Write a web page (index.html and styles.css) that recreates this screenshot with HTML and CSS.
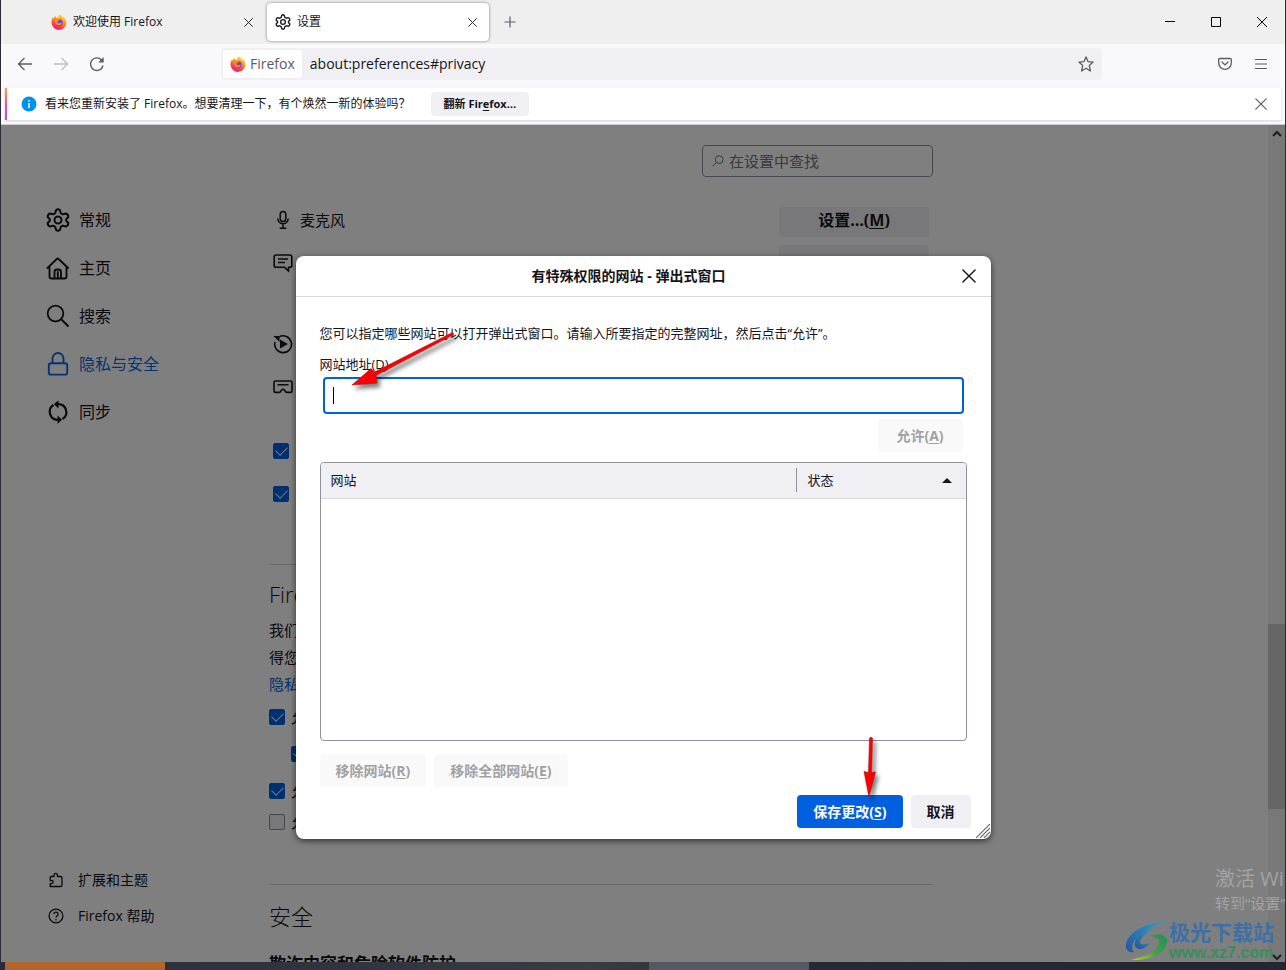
FILE: index.html
```html
<!DOCTYPE html>
<html lang="zh-CN">
<head>
<meta charset="utf-8">
<title>设置</title>
<link rel="stylesheet" href="styles.css">
</head>
<body>
<svg class="defs" width="0" height="0" aria-hidden="true">
  <defs>
    <linearGradient id="flame" x1="0.8" y1="0" x2="0.3" y2="1">
      <stop offset="0" stop-color="#fff14a"/><stop offset="0.4" stop-color="#ff9a1f"/><stop offset="0.75" stop-color="#ff3a4a"/><stop offset="1" stop-color="#e8178a"/>
    </linearGradient>
    <symbol id="firefox" viewBox="0 0 16 16">
      <path fill="url(#flame)" d="M8.800.3c1.700.8 2.500 2 2.800 3.100.5.1.9-.4.9-.9 1.700 1.500 3 3.500 3 6A7.500 7.500 0 0 1 8 15.900 7.500 7.500 0 0 1 .5 8.400c0-2 .5-3.800 1.700-5.200 0 .6.1 1 .4 1.300C3 3.400 3.700 2.600 4.700 2c0 .8.3 1.500.8 1.900h1.600C7.200 2.400 7.700 1.200 8.800.3z"/>
      <circle cx="8" cy="8.600" r="3.700" fill="#7542e5"/>
      <path fill="#ff8a16" d="M3.400 5.300c1-.9 2.400-1 3.700-.4.7.3 1.500.3 2.200.4-.3.900-1.100 1.200-2 1.400-.6.200-.8.700-.8 1.200.1 1.300 1.800 1.900 3 1.100.6-.4 1.100-.3 1.400 0-.5 1.700-2.200 2.600-3.900 2.200C4.400 10.700 3 8.100 3.400 5.300z"/>
    </symbol>
    <symbol id="gear" viewBox="0 0 24 24">
      <g fill="none" stroke="currentColor" stroke-width="2" stroke-linejoin="round">
        <path d="M10 2.200Q12 .2 14 2.200L14.700 5.100 16.900 6.400 19.800 5.500Q22.300 6.200 22.300 9L20.200 11.200V12.800L22.300 15Q22.300 17.800 19.800 18.500L16.900 17.600 14.700 18.900 14 21.800Q12 23.800 10 21.800L9.300 18.900 7.100 17.600 4.200 18.500Q1.700 17.800 1.700 15L3.800 12.800V11.200L1.700 9Q1.700 6.200 4.200 5.500L7.100 6.400 9.300 5.100Z"/>
        <circle cx="12" cy="12" r="3.500"/>
      </g>
    </symbol>
    <symbol id="cross" viewBox="0 0 12 12"><path d="M.8.8l10.400 10.400M11.200.8L.8 11.200" fill="none" stroke="currentColor" stroke-width="1.200" stroke-linecap="round"/></symbol>
  </defs>
</svg>

<div class="window">
  <header class="tabs">
    <button class="tab">
      <svg class="i16"><use href="#firefox"/></svg><span class="tab-title">欢迎使用 Firefox</span><svg class="i9"><use href="#cross"/></svg>
    </button>
    <button class="tab active">
      <svg class="i16"><use href="#gear"/></svg><span class="tab-title">设置</span><svg class="i9"><use href="#cross"/></svg>
    </button>
    <button class="new-tab" aria-label="新建标签页"><svg class="i12" viewBox="0 0 12 12"><path d="M6 .5v11M.5 6h11" stroke="currentColor" stroke-width="1.200"/></svg></button>
    <div class="window-controls">
      <button aria-label="最小化"><svg class="i12" viewBox="0 0 12 12"><path d="M1 5.500h10" stroke="#000"/></svg></button>
      <button aria-label="最大化"><svg class="i12" viewBox="0 0 12 12"><path d="M1.500 1.500h9v9h-9z" fill="none" stroke="#000"/></svg></button>
      <button aria-label="关闭"><svg class="i12" viewBox="0 0 12 12"><path d="M1 1l10 10M11 1L1 11" stroke="#000"/></svg></button>
    </div>
  </header>

  <nav class="toolbar">
    <button aria-label="后退"><svg class="i16" viewBox="0 0 16 16"><path d="M15 8H1.500M7.500 2L1.500 8l6 6" fill="none" stroke="currentColor" stroke-width="1.300"/></svg></button>
    <button aria-label="前进" disabled><svg class="i16" viewBox="0 0 16 16"><path d="M1 8h13.500M8.500 2l6 6-6 6" fill="none" stroke="currentColor" stroke-width="1.300"/></svg></button>
    <button aria-label="刷新"><svg class="i16" viewBox="0 0 16 16"><path d="M14 9.500A6.300 6.300 0 1 1 12.600 4" fill="none" stroke="currentColor" stroke-width="1.400"/><path d="M14.700 1v5.500H9.200z" fill="currentColor"/></svg></button>
    <div class="urlbar">
      <span class="identity"><svg class="i16"><use href="#firefox"/></svg>Firefox</span>
      <input class="url" type="text" aria-label="地址" value="about:preferences#privacy">
      <button aria-label="收藏"><svg class="i16" viewBox="0 0 16 16"><path d="M8 .9l2 4.700 5.100.5-3.800 3.500 1.100 5.400L8 12.200 3.600 15l1.100-5.400L.9 6.100 6 5.600z" fill="none" stroke="currentColor" stroke-width="1.300" stroke-linejoin="round"/></svg></button>
    </div>
    <div class="tools">
      <button aria-label="Pocket"><svg class="i14" viewBox="0 0 14 14"><path d="M1.700 1.500h10.600q1 0 1 1V6a6.300 6.300 0 0 1-12.600 0V2.500q0-1 1-1z M4 5l3 2.900L10 5" fill="none" stroke="currentColor" stroke-width="1.300" stroke-linecap="round"/></svg></button>
      <button aria-label="菜单"><svg class="i12" viewBox="0 0 12 12"><path d="M0 1.500h12M0 6h12M0 10.500h12" stroke="currentColor" stroke-width="1.200"/></svg></button>
    </div>
  </nav>

  <div class="notice-wrap">
    <div class="notice">
      <svg class="i16" viewBox="0 0 16 16"><circle cx="8" cy="8" r="7.500" fill="#0090ed"/><path d="M8 7v5M8 4v1.500" stroke="#fff" stroke-width="1.500"/></svg>
      <span class="notice-text">看来您重新安装了 Firefox。想要清理一下，有个焕然一新的体验吗？</span>
      <button class="refresh">翻新 Fir<u>e</u>fox…</button>
      <button class="notice-close" aria-label="关闭"><svg class="i12"><use href="#cross"/></svg></button>
    </div>
  </div>

  <div class="viewport">
    <aside class="sidebar">
      <a href="#general"><svg class="i24"><use href="#gear"/></svg>常规</a>
      <a href="#home"><svg class="i24" viewBox="0 0 24 24"><path d="M1.500 12L11 2.800q.7-.6 1.400 0L22 12M3.500 11v9.500q0 2 2 2h13q2 0 2-2V11M8.500 22v-6q0-2.500 2.500-2.500h1.500q2.500 0 2.500 2.500v6M11.800 16v6" fill="none" stroke="currentColor" stroke-width="1.900" stroke-linecap="round"/></svg>主页</a>
      <a href="#search"><svg class="i24" viewBox="0 0 24 24"><circle cx="9.500" cy="9.500" r="7.800" fill="none" stroke="currentColor" stroke-width="1.800"/><path d="M15 15l7.500 7.500" stroke="currentColor" stroke-width="2"/></svg>搜索</a>
      <a href="#privacy" class="current"><svg class="i24" viewBox="0 0 24 24"><path d="M6.500 11V6.500a5.500 5.500 0 0 1 11 0V11M5 11.200h14q2.200 0 2.200 2.200v7q0 2.200-2.200 2.200H5q-2.200 0-2.200-2.200v-7q0-2.200 2.200-2.200z" fill="none" stroke="currentColor" stroke-width="1.900"/></svg>隐私与安全</a>
      <a href="#sync"><svg class="i24" viewBox="0 0 24 24"><path d="M12 4.200A8 8 0 0 1 16.500 19M12 19.800A8 8 0 0 1 7.500 5" fill="none" stroke="currentColor" stroke-width="2.200"/><path d="M12.500.2v8.200L7.800 4.300zM11.500 15.600v8.200l4.700-4.100z" fill="currentColor"/></svg>同步</a>
      <div class="sidebar-foot">
        <a href="#addons"><svg class="i16" viewBox="0 0 16 16"><path d="M2.200 5.500q0-1 1-1H6V3a1.700 1.700 0 0 1 3.400 0v1.500h3.400q1.200 0 1.200 1.200v7.600q0 1.200-1.200 1.200H2.200v-2.800h1.300q1.700-.2 1.700-1.600T3.500 8.500H2.200z" fill="none" stroke="currentColor" stroke-width="1.300" stroke-linejoin="round"/></svg>扩展和主题</a>
        <a href="#help"><svg class="i16" viewBox="0 0 16 16"><circle cx="8" cy="8" r="6.900" fill="none" stroke="currentColor" stroke-width="1.300"/><path d="M5.900 6.300A2.100 2 0 1 1 8.800 8Q8 8.500 8 9.600M8 10.900v1.500" fill="none" stroke="currentColor" stroke-width="1.300"/></svg>Firefox 帮助</a>
      </div>
    </aside>

    <main class="main">
      <div class="search-row">
        <label class="search"><svg class="i12" viewBox="0 0 12 12"><circle cx="7.200" cy="4.600" r="3.900" fill="none" stroke="currentColor"/><path d="M4.400 7.500L.6 11.300" stroke="currentColor"/></svg><input type="search" aria-label="在设置中查找" placeholder="在设置中查找"></label>
      </div>
      <div class="scroller">
        <div class="permissions">
          <div class="perm"><svg class="i20" viewBox="0 0 20 20"><path d="M10 1.500a2.800 2.800 0 0 1 2.800 2.800v4.500a2.800 2.800 0 0 1-5.600 0V4.300A2.800 2.800 0 0 1 10 1.500zM4.800 8.500a5.200 5.200 0 0 0 10.400 0M10 14v4M6.700 18.300h6.600" fill="none" stroke="currentColor" stroke-width="1.500"/></svg><span>麦克风</span><button class="settings">设置…(<u>M</u>)</button></div>
          <div class="perm"><svg class="i20" viewBox="0 0 20 20"><path d="M3 2h14q1.800 0 1.800 1.800v8.700q0 1.800-1.800 1.800h-1.500V18l-4-3.700H3q-1.800 0-1.800-1.800V3.800Q1.200 2 3 2zM5 6h10M5 9.500h7" fill="none" stroke="currentColor" stroke-width="1.600"/></svg><button class="settings" aria-label="通知设置"></button></div>
          <div class="perm gap"><svg class="i20" viewBox="0 0 20 20"><path d="M6 2.900A8.400 8.400 0 1 1 2 8" fill="none" stroke="currentColor" stroke-width="1.600"/><path d="M7 5.500v9l8-4.500zM.5 2h6v6z" fill="currentColor"/></svg></div>
          <div class="perm"><svg class="i20" viewBox="0 0 20 20"><path d="M2.500 4h15Q19 4 19 5.500v8.200q0 1.700-1.700 1.700H14q-1 0-1.600-.9l-1-1.500q-1.400-1.500-2.800 0l-1 1.500q-.6.900-1.600.9H2.700Q1 15.400 1 13.700V5.500Q1 4 2.500 4zM4.500 7.700h11" fill="none" stroke="currentColor" stroke-width="1.600"/></svg></div>
        </div>
        <div class="options">
          <div class="perm"><input type="checkbox" checked aria-label="阻止弹出式窗口"></div>
          <div class="perm"><input type="checkbox" checked aria-label="网站安装附加组件警告"></div>
        </div>
        <section>
          <h2>Firefox</h2>
          <p>我们<br>得您<br><a href="#policy">隐私</a></p>
          <label class="check"><input type="checkbox" checked>允</label>
          <div class="check nested"><input type="checkbox" checked aria-label="个性化推荐"></div>
          <label class="check"><input type="checkbox" checked>允</label>
          <label class="check last"><input type="checkbox">允</label>
        </section>
        <section class="security">
          <h2>安全</h2>
          <h3>欺诈内容和危险软件防护</h3>
        </section>
      </div>
    </main>

    <div class="scrollbar" aria-hidden="true">
      <svg class="i10" viewBox="0 0 10 10"><path d="M1 7l4-4 4 4" fill="none" stroke="#404040" stroke-width="2.200"/></svg>
      <div class="thumb"></div>
      <svg class="i10 down" viewBox="0 0 10 10"><path d="M1 3l4 4 4-4" fill="none" stroke="#404040" stroke-width="2.200"/></svg>
    </div>

    <div class="backdrop">
      <div class="dialog" role="dialog" aria-labelledby="dialog-title">
        <div class="dialog-head">
          <h1 id="dialog-title">有特殊权限的网站 - 弹出式窗口</h1>
          <button aria-label="关闭"><svg class="i14" viewBox="0 0 12 12"><use href="#cross"/></svg></button>
        </div>
        <div class="dialog-body">
          <p>您可以指定哪些网站可以打开弹出式窗口。请输入所要指定的完整网址，然后点击“允许”。</p>
          <label for="site">网站地址(<u>D</u>)</label>
          <div class="field"><span class="caret"></span><input id="site" type="text"></div>
          <button class="btn allow" disabled>允许(<u>A</u>)</button>
          <div class="sites">
            <table>
              <thead><tr><th>网站</th><th class="status"><div>状态<svg class="sort" viewBox="0 0 10 5"><path d="M0 5L5 0l5 5z" fill="#15141a"/></svg></div></th></tr></thead>
            </table>
          </div>
          <div class="remove">
            <button class="btn" disabled>移除网站(<u>R</u>)</button>
            <button class="btn" disabled>移除全部网站(<u>E</u>)</button>
          </div>
        </div>
        <div class="dialog-foot">
          <button class="btn primary">保存更改(<u>S</u>)</button>
          <button class="btn">取消</button>
        </div>
        <svg class="grip" viewBox="0 0 14 14"><path d="M0 14L14 0M4 14L14 4M8 14l6-6M12 14l2-2" stroke="#6a6a6a" stroke-width="1.200"/></svg>
        <svg class="arrow arrow-field" viewBox="0 0 110 64"><path d="M103.500 4.500L25.500 44 22 40.500 3 57 28 55 27 47.500 105 6.500z" fill="#fe0000" stroke="#a81010" stroke-width=".6"/></svg>
        <svg class="arrow arrow-save" viewBox="0 0 20 66"><path d="M9.500 4q1.500-1.500 3 0L11.700 38.500 15.500 38 9 63 4 37.500l4.500 1z" fill="#fe0000" stroke="#a81010" stroke-width=".6"/></svg>
      </div>
    </div>

    <div class="activation"><div class="activation-title">激活 Windows</div><div>转到“设置”</div></div>
    <div class="brand">
      <svg viewBox="0 0 42 40">
        <defs>
          <linearGradient id="sky" x1="1" y1="0" x2="0" y2="1"><stop offset="0" stop-color="#2aa0d0"/><stop offset="1" stop-color="#28549c"/></linearGradient>
          <linearGradient id="leaf" x1="1" y1="0" x2="0" y2="1"><stop offset="0" stop-color="#23925a"/><stop offset=".5" stop-color="#3da045"/><stop offset="1" stop-color="#c3cb35"/></linearGradient>
        </defs>
        <path fill="url(#sky)" d="M40 1C22 1 3 10 0 23c-1 6 3 9 8 8-4-5-1-12 7-18C21 8 28 4 40 1z"/>
        <path fill="url(#sky)" d="M29 7C15 10 7 18 9 25c2 5 11 4 14-3-4 2-9 2-9-1 0-4 7-10 15-14z"/>
        <path fill="url(#leaf)" d="M24 15c8-3 16-1 17 4 1 9-9 16-22 19-4 1-9 1-14 1 10-3 26-8 28-17 1-4-3-6-9-7z"/>
        <path fill="#808080" d="M8 37c10-2 19-6 24-12-4 7-12 11-24 12z"/>
      </svg>
      <div><div class="brand-name">极光下载站</div><div class="brand-url">www.xz7.com</div></div>
    </div>
  </div>
</div>
<div class="taskbar" aria-hidden="true"><i class="slot orange"></i><i class="slot grey"></i></div>
</body>
</html>
```

FILE: styles.css
```css
* { box-sizing: border-box; }
body {
  margin: 0;
  height: 100vh;
  display: flex;
  flex-direction: column;
  overflow: hidden;
  background: #2b2b36;
  color: #15141a;
  font: 13px/20px "Open Sans", "Noto Sans CJK SC", sans-serif;
}
button, input { font: inherit; color: inherit; }
button { border: 0; padding: 0; background: none; display: flex; align-items: center; justify-content: center; }
svg { display: block; flex: none; }
h1, h2, h3, p { margin: 0; }
a { color: inherit; text-decoration: none; }
u { text-underline-offset: 2px; }
.defs { position: absolute; }
.i9 { width: 9px; height: 9px; }
.i10 { width: 10px; height: 10px; }
.i12 { width: 12px; height: 12px; }
.i14 { width: 14px; height: 14px; }
.i16 { width: 16px; height: 16px; }
.i20 { width: 20px; height: 20px; }
.i24 { width: 24px; height: 24px; }

.window { flex: 1; min-height: 0; margin: 0 1px; display: flex; flex-direction: column; background: #f9f9fb; }

/* Tab strip */
.tabs { height: 44px; padding: 0 0 0 42px; display: flex; align-items: center; background: #efefef; font-size: 12px; }
.tab { width: 222px; height: 38px; padding: 0 12px 0 8px; gap: 6px; border-radius: 4px; }
.tab.active { margin-left: 2px; background: #fff; box-shadow: 0 0 3px rgba(0, 0, 0, .5); }
.tab-title { flex: 1; text-align: left; }
.new-tab { width: 42px; color: #5b5b66; }
.window-controls { margin-left: auto; display: flex; }
.window-controls button { width: 46px; height: 38px; }

/* Navigation toolbar */
.toolbar { height: 40px; padding: 0 6px; display: flex; align-items: center; color: #5b5b66; }
.toolbar button { width: 36px; height: 32px; }
.toolbar button:disabled { color: #bdbdc3; }
.urlbar { flex: 1; height: 32px; margin: 0 105px 0 106px; padding: 2px 0 2px 2px; display: flex; align-items: center; border-radius: 4px; background: #f0f0f4; font-size: 14px; }
.identity { height: 28px; padding: 0 7px; display: flex; align-items: center; gap: 4px; border-radius: 3px; background: #fff; }
.url { flex: 1; min-width: 0; padding: 0 8px; border: 0; background: none; color: #15141a; outline: 0; }
.urlbar button { width: 32px; }
.tools { display: flex; }

/* Notification bar */
.notice-wrap { height: 41px; padding: 4px 4px 5px; border-bottom: 1px solid #cccccf; }
.notice { height: 32px; padding: 0 14px; display: flex; align-items: center; gap: 8px; border-left: 2px solid; border-image: linear-gradient(#ffa436, #ff4aa2, #9059ff) 1; background: #fff; box-shadow: 0 1px 2px rgba(58, 57, 68, .2); font-size: 12px; }
.refresh { height: 24px; margin-left: 12px; padding: 0 13px; border-radius: 4px; background: #f0f0f4; font-weight: 700; font-size: 11px; }
.notice-close { margin-left: auto; color: #5b5b66; }

/* Page */
.viewport { position: relative; flex: 1; min-height: 0; display: flex; overflow: hidden; background: #fff; }
.sidebar { width: 268px; padding: 71px 0 28px 45px; display: flex; flex-direction: column; font-size: 16px; }
.sidebar a { height: 48px; display: flex; align-items: center; gap: 9px; }
.sidebar .current { color: #0a68e0; }
.sidebar-foot { margin-top: auto; padding-left: 2px; font-size: 14px; }
.sidebar-foot a { height: 36px; gap: 14px; }
.main { flex: 0 1 664px; min-width: 0; display: flex; flex-direction: column; font-size: 15px; }
.search-row { flex: none; height: 82px; padding-top: 20px; display: flex; justify-content: flex-end; align-items: flex-start; }
.search { width: 231px; height: 32px; padding: 0 9px; display: flex; align-items: center; gap: 5px; border: 1px solid #8f8f9d; border-radius: 4px; color: #73737a; }
.search input { flex: 1; min-width: 0; padding: 0; border: 0; background: none; outline: 0; }
.search input::placeholder { color: #73737a; opacity: 1; }
.scroller { flex: 1; min-height: 0; overflow: hidden; }
.permissions { margin-top: -9px; }
.perm { height: 43px; padding: 0 4px; display: flex; align-items: center; gap: 7px; }
.perm.gap { margin-top: 38px; }
.settings { width: 150px; height: 35px; margin-left: auto; border-radius: 4px; background: #f0f0f4; font-size: 16px; font-weight: 700; }
.options { margin: 21px 0 49px; }
input[type="checkbox"] { appearance: none; flex: none; width: 16px; height: 16px; margin: 0; display: grid; place-items: center; border: 1px solid #8f8f9d; border-radius: 2px; background: #f0f0f4; }
input[type="checkbox"]:checked { border-color: #0060df; background: #0060df; }
input[type="checkbox"]:checked::before { content: ""; width: 10px; height: 6px; margin-bottom: 3px; border: solid #fff; border-width: 0 0 1px 1px; transform: rotate(-45deg); }
section { padding-top: 15px; border-top: 1px solid #d7d7db; }
h2 { font-size: 22px; line-height: 28px; font-weight: 300; }
section p { margin-top: 9px; line-height: 27px; }
section p a { color: #0060df; }
.check { height: 37px; display: flex; align-items: center; gap: 6px; }
.check.nested { padding-left: 22px; }
.check.last { height: 25px; }
.security { margin-top: 50px; padding-top: 17px; }
h3 { margin-top: 22px; font-size: 17px; line-height: 24px; }
.scrollbar { width: 17px; margin-left: auto; padding: 4px 0 0; display: grid; grid-template-rows: 10px 485fr 185fr 143fr 10px; justify-items: center; background: #f0f0f0; }
.thumb { grid-row: 3; width: 17px; background: #cdcdcd; }
.down { grid-row: 5; }

/* Dialog */
.backdrop { position: absolute; inset: 0; padding-top: 8px; display: flex; align-items: center; justify-content: center; background: rgba(0, 0, 0, .5); }
.dialog { position: relative; width: 695px; border-radius: 8px; background: #fff; box-shadow: 0 2px 6px rgba(0, 0, 0, .6); }
.dialog-head { height: 41px; padding-right: 15px; display: flex; align-items: center; border-bottom: 1px solid #d7d7db; }
.dialog-head h1 { flex: 1; font-size: 14px; line-height: 20px; text-align: center; }
.dialog-body { padding: 26px 24px 8px; display: flex; flex-direction: column; }
.dialog-body label { margin: 11px 0 3px; }
.field { position: relative; margin: 0 3px; display: flex; }
.field input { flex: 1; height: 37px; padding: 0 8px; border: 2px solid #0060df; border-radius: 4px; background: #fff; outline: 0; }
.caret { position: absolute; left: 10px; top: 10px; width: 1px; height: 17px; background: #000; }
.btn { height: 33px; padding: 0 16px; border-radius: 4px; background: #f0f0f4; font-size: 14px; font-weight: 700; }
.btn:disabled { background: #f9f9fa; color: #a1a1a4; }
.btn.primary { background: #0060df; color: #fbfbfe; }
.allow { min-width: 85px; align-self: flex-end; margin: 5px 4px 10px; }
.sites { height: 279px; border: 1px solid #8f8f9d; border-radius: 4px; overflow: hidden; }
table { width: 100%; border-collapse: collapse; }
th { height: 35px; padding: 0 0 0 10px; border-bottom: 1px solid #d7d7db; background: #f0f0f4; text-align: left; font-weight: 400; }
.status { width: 170px; padding: 0; }
.status div { height: 24px; padding: 0 14px 0 11px; display: flex; align-items: center; justify-content: space-between; border-left: 1px solid #8f8f9d; }
.sort { width: 10px; height: 5px; }
.remove { margin-top: 13px; display: flex; gap: 8px; }
.dialog-foot { padding: 0 20px 11px; display: flex; justify-content: flex-end; gap: 8px; }
.grip { position: absolute; right: 1px; bottom: 1px; width: 14px; height: 14px; }
.arrow { position: absolute; filter: drop-shadow(3px 4px 2px rgba(0, 0, 0, .5)); }
.arrow-field { left: 53px; top: 72px; width: 110px; height: 64px; }
.arrow-save { left: 564px; top: 478px; width: 20px; height: 66px; }

/* Overlaid marks */
.activation { position: absolute; left: 1214px; bottom: 49px; width: 71px; color: #a3a3a3; font-size: 15px; line-height: 20px; white-space: nowrap; }
.activation-title { font-size: 20px; line-height: 28px; }
.brand { position: absolute; right: 11px; bottom: 0; display: flex; align-items: center; gap: 1px; color: #3b70a8; }
.brand svg { width: 42px; height: 40px; }
.brand-name { font-size: 21px; line-height: 24px; font-weight: 700; }
.brand-url { color: #36905a; font: 700 16px/18px "Liberation Sans", sans-serif; }

.taskbar { height: 8px; padding-left: 5px; display: flex; background: linear-gradient(90deg, #2c2c38, #343841 38%, #3a3c42 46%, #292836 60%, #262632); }
.slot { width: 160px; }
.orange { background: #b0652c; }
.grey { margin-left: 484px; background: #585863; }
```
